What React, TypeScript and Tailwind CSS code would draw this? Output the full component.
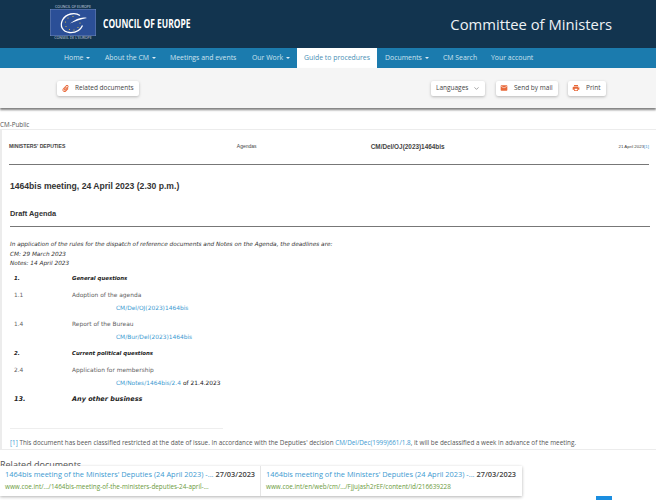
import { ChevronDown } from "lucide-react";
import { FaPaperclip } from "react-icons/fa";
import { MdEmail, MdPrint } from "react-icons/md";

const navItems = [
  { label: "Home", caret: true, className: "ml-[64px] w-[41px]" },
  { label: "About the CM", caret: true, className: "w-[65px]" },
  { label: "Meetings and events", caret: false, className: "w-[82px]" },
  { label: "Our Work", caret: true, className: "w-[45px]" },
];

const navAfter = [
  { label: "Documents", caret: true, className: "ml-[8px] w-[58px]" },
  { label: "CM Search", caret: false, className: "w-[48px]" },
  { label: "Your account", caret: false, className: "" },
];

function NavLink({ label, caret, className }: { label: string; caret: boolean; className: string }) {
  return (
    <a className={`flex items-center gap-[3px] whitespace-nowrap text-[6.9px] text-[#cfe3ee] ${className}`}>
      {label}
      {caret && <span className="h-0 w-0 border-x-[2px] border-t-[2px] border-x-transparent border-t-[#dcecf5]" />}
    </a>
  );
}

function ToolButton({ children, className }: { children: React.ReactNode; className: string }) {
  return (
    <button className={`flex h-[15px] items-center whitespace-nowrap rounded-[2px] bg-white text-[6.5px] text-[#444] shadow-[0_1px_3px_rgba(0,0,0,0.25)] ${className}`}>
      {children}
    </button>
  );
}

function AgendaHead({ num, title, big }: { num: string; title: string; big?: boolean }) {
  return (
    <div className={`flex h-[9px] items-center font-bold italic text-[#222] ${big ? "text-[6.5px]" : "text-[5.4px]"}`}>
      <span className="w-[63px] pl-[5px]">{num}</span>
      <span>{title}</span>
    </div>
  );
}

function AgendaItem({ num, title, link, rest }: { num: string; title: string; link: string; rest?: string }) {
  return (
    <div className="text-[5.9px] text-[#5f5f5f]">
      <div className="flex h-[9px] items-center">
        <span className="w-[63px] pl-[5px]">{num}</span>
        <span>{title}</span>
      </div>
      <div className="mt-[4px] flex h-[9px] items-center pl-[107px]">
        <a className="text-[#3d9ad1]">{link}</a>
        {rest && <span className="ml-[2px] text-[#222]">{rest}</span>}
      </div>
    </div>
  );
}

function RelatedCard({ url, className }: { url: string; className: string }) {
  return (
    <div className={`h-[30px] pl-[5px] pt-[3px] ${className}`}>
      <div className="flex h-[12px] items-center whitespace-nowrap text-[7.4px]">
        <a className="text-[#3d9ad1]">1464bis meeting of the Ministers' Deputies (24 April 2023) -...</a>
        <span className="ml-[2px] font-semibold text-[#444]">27/03/2023</span>
      </div>
      <div className="mt-[1px] whitespace-nowrap text-[6.35px] text-[#6a9a3c]">{url}</div>
    </div>
  );
}

export default function App() {
  return (
    <div className="relative h-[500px] w-[656px] overflow-hidden bg-white font-['Open_Sans',sans-serif]">
      {/* Header */}
      <header className="flex h-[48px] items-center justify-between bg-[#12344f] pl-[50px] pr-[44px]">
        <div className="flex items-center">
          <div className="mb-[4px] flex w-[46px] flex-col items-center">
            <div className="h-[5px] text-[3.6px] leading-[5px] whitespace-nowrap text-[#cfd8e0]">COUNCIL OF EUROPE</div>
            <svg viewBox="0 0 46 27" className="h-[27px] w-[46px]">
              <rect width="46" height="27" fill="#2b4f97" stroke="#9fb0cc" strokeWidth="0.6" />
              <path d="M30 6.5C25 3 16 4.5 12.5 11c-3 6 0 12 7 12.5 6 .4 11-2.500 13-7" fill="none" stroke="#fff" strokeWidth="1.3" />
              <path d="M37 9c-5-1.500-11 .8-17 5.500 6-2.500 11-4.500 17-5.500z" fill="#fff" />
              <g fill="#e8c840">
                <circle cx="23" cy="7.500" r=".6" />
                <circle cx="18" cy="9" r=".6" />
                <circle cx="15.500" cy="13" r=".6" />
                <circle cx="16" cy="17.500" r=".6" />
                <circle cx="19.500" cy="20.500" r=".6" />
                <circle cx="24" cy="21" r=".6" />
                <circle cx="28" cy="18.500" r=".6" />
                <circle cx="30" cy="14" r=".6" />
              </g>
            </svg>
            <div className="h-[4px] text-[3.6px] leading-[4px] whitespace-nowrap text-[#cfd8e0]">CONSEIL DE L'EUROPE</div>
          </div>
          <div className="ml-[7px] origin-left scale-x-[0.735] whitespace-nowrap text-[11.5px] font-bold text-white">COUNCIL OF EUROPE</div>
        </div>
        <div className="text-[14.8px] text-[#eef2f5]">Committee of Ministers</div>
      </header>

      {/* Nav */}
      <nav className="flex h-[20px] items-stretch bg-[#1b7bae]">
        {navItems.map((n) => (
          <NavLink key={n.label} {...n} />
        ))}
        <a className="flex w-[80px] items-center justify-center whitespace-nowrap bg-white text-[6.9px] text-[#4a8fb5]">Guide to procedures</a>
        {navAfter.map((n) => (
          <NavLink key={n.label} {...n} />
        ))}
      </nav>

      {/* Toolbar */}
      <div className="relative flex h-[40px] items-center bg-[#f5f5f5] pl-[57px] shadow-[0_2px_2px_rgba(0,0,0,0.5)]">
        <ToolButton className="w-[82px] pl-[5px]">
          <FaPaperclip className="h-[7px] w-[7px] text-[#e8693a]" />
          <span className="ml-[6px]">Related documents</span>
        </ToolButton>
        <ToolButton className="ml-[292px] w-[54px] justify-between px-[5px]">
          Languages
          <ChevronDown className="h-[7px] w-[7px] text-[#666]" />
        </ToolButton>
        <ToolButton className="ml-[11px] w-[62px] pl-[4px]">
          <MdEmail className="h-[8px] w-[8px] text-[#e8693a]" />
          <span className="ml-[6px]">Send by mail</span>
        </ToolButton>
        <ToolButton className="ml-[10px] w-[38px] pl-[4px]">
          <MdPrint className="h-[8px] w-[8px] text-[#e8693a]" />
          <span className="ml-[6px]">Print</span>
        </ToolButton>
      </div>

      {/* Document */}
      <div className="h-[21px] pt-[13px] text-[6.3px] leading-[8px] text-[#555]">CM-Public</div>
      <main className="h-[321px] border-y border-l-2 border-[#ececec] pl-[7px]">
        <div className="flex h-[35px] w-[640px] items-center border-b border-[#777] font-['Liberation_Sans',sans-serif] text-[5px] text-[#444]">
          <span className="w-[228px] text-[5.15px] font-bold">MINISTERS' DEPUTIES</span>
          <span className="w-[134px]">Agendas</span>
          <span className="w-[248px] text-[6.4px] font-bold">CM/Del/OJ(2023)1464bis</span>
          <span className="whitespace-nowrap text-[4.4px]">
            21 April 2023<a className="text-[#3d9ad1]">[1]</a>
          </span>
        </div>
        <div className="ml-[1px] w-[640px] border-b border-[#777] pb-[6px] font-['Liberation_Sans',sans-serif] font-bold text-[#333]">
          <h1 className="mt-[15px] h-[13px] text-[8.6px] leading-[13px]">1464bis meeting, 24 April 2023 (2.30 p.m.)</h1>
          <h2 className="mt-[15px] h-[12px] text-[7.4px] leading-[12px]">Draft Agenda</h2>
        </div>
        <div className="mt-[13px] pl-[1px] font-['DejaVu_Sans',sans-serif] text-[5.75px] leading-[9.5px] text-[#333] italic">
          <p>In application of the rules for the dispatch of reference documents and Notes on the Agenda, the deadlines are:</p>
          <p>CM: 29 March 2023</p>
          <p>Notes: 14 April 2023</p>
        </div>
        <div className="mt-[5px] flex flex-col font-['DejaVu_Sans',sans-serif]">
          <AgendaHead num="1." title="General questions" />
          <div className="mt-[8px]">
            <AgendaItem num="1.1" title="Adoption of the agenda" link="CM/Del/OJ(2023)1464bis" />
          </div>
          <div className="mt-[7px]">
            <AgendaItem num="1.4" title="Report of the Bureau" link="CM/Bur/Del(2023)1464bis" />
          </div>
          <div className="mt-[7px]">
            <AgendaHead num="2." title="Current political questions" />
          </div>
          <div className="mt-[8px]">
            <AgendaItem num="2.4" title="Application for membership" link="CM/Notes/1464bis/2.4" rest="of 21.4.2023" />
          </div>
          <div className="mt-[8px]">
            <AgendaHead num="13." title="Any other business" big />
          </div>
        </div>
        <div className="ml-[1px] mt-[23px] w-[213px] border-t border-[#eee]" />
        <p className="mt-[9px] pl-[1px] text-[6.34px] whitespace-nowrap text-[#555]">
          <a className="text-[#3d9ad1]">[1]</a> This document has been classified restricted at the date of issue. In accordance with the Deputies' decision{" "}
          <a className="text-[#3d9ad1]">CM/Del/Dec(1999)661/1.8</a>, it will be declassified a week in advance of the meeting.
        </p>
      </main>

      {/* Related documents, partly hidden by the fixed bar */}
      <div className="pt-[9px] text-[9px] leading-[12px] text-[#555]">Related documents</div>
      <div className="absolute bottom-[4px] left-0 flex h-[30px] w-[522px] bg-white shadow-[0_1px_3px_rgba(0,0,0,0.3)]">
        <RelatedCard url="www.coe.int/.../1464bis-meeting-of-the-ministers-deputies-24-april-..." className="w-[261px] border-r border-[#e5e5e5]" />
        <RelatedCard url="www.coe.int/en/web/cm/.../Fjjujash2rEF/content/id/216639228" className="w-[261px]" />
      </div>
      <div className="absolute bottom-0 left-[596px] h-[4px] w-[16px] bg-[#1b8ee0]" />
    </div>
  );
}
